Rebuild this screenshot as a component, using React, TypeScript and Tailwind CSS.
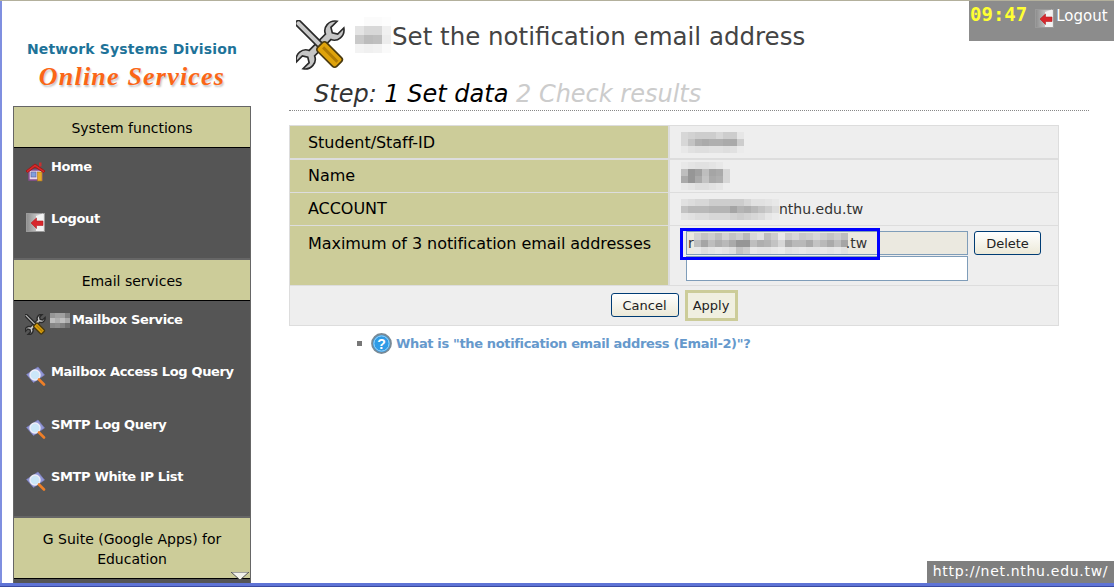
const HouseIcon = () => (
  <svg width="21" height="21" viewBox="0 0 21 21">
    <path d="M4 9h13v10H4z" fill="#e8d8e8" stroke="#8a4f92" strokeWidth="1.4" />
    <path d="M1 10 10 3l10 7-1.500 1.500L10 6 2.500 11.500z" fill="#d92a2a" stroke="#a01818" strokeWidth="1" />
    <rect x="14" y="1.500" width="2.500" height="4" fill="#c83030" />
    <rect x="6" y="11" width="5" height="5" fill="#7f9fdc" stroke="#5a5aa0" strokeWidth=".6" />
    <rect x="12.500" y="11" width="4.500" height="9" fill="#e6a92c" stroke="#a87a18" strokeWidth=".6" />
  </svg>
);

const LogoutIcon = ({ id }: { id: string }) => (
  <svg width="19" height="19" viewBox="0 0 19 19">
    <defs>
      <linearGradient id={id} x1="0" x2="1" y1="0" y2="0">
        <stop offset="0" stopColor="#8c8c8c" />
        <stop offset="1" stopColor="#ededed" />
      </linearGradient>
    </defs>
    <rect x=".5" y=".5" width="18" height="18" fill={`url(#${id})`} stroke="#9a9a9a" />
    <path d="M10 3l7-2.500V18h-7z" fill="#f2f2f2" />
    <path d="M5 10l5.500-5V8H17v4.500h-6.500V15.500z" fill="#d8262c" stroke="#b31e22" strokeWidth=".6" />
  </svg>
);

const SearchIcon = () => (
  <svg width="20" height="20" viewBox="0 0 20 20">
    <path d="M0.500 8.500 12 1l6.500 8-11 7.500z" fill="#9297d6" stroke="#7a7ec4" strokeWidth=".6" />
    <circle cx="9" cy="9" r="5" fill="#cbe7f8" stroke="#eeeef8" strokeWidth="1.400" />
    <path d="M13 13.500l5 5" stroke="#ee7f28" strokeWidth="2.600" strokeLinecap="round" />
  </svg>
);

const ToolsIcon = ({ size = 50, stroke = 1.7 }: { size?: number; stroke?: number }) => (
  <svg width={size} height={size} viewBox="0 0 50 52">
    <g transform="translate(24 26) rotate(45)">
      <path
        d="M-4-12C-11-15-12-25-5-30L-5-21 0-18 5-21 5-30C12-25 11-15 4-12L4 12C11 15 12 25 5 30L5 21 0 18-5 21-5 30C-12 25-11 15-4 12Z"
        fill="#c6c6c6"
        stroke="#2a2a2a"
        strokeWidth={stroke}
      />
    </g>
    <g transform="translate(24 26) rotate(-45)">
      <path d="M-3-31C-3.500-36 3.500-36 3-31L3 2-3 2Z" fill="#c9c9c9" stroke="#2a2a2a" strokeWidth={stroke} />
      <rect x="-6.500" y="0" width="13" height="28" rx="3" fill="#dfa30c" stroke="#4a3a10" strokeWidth={stroke} />
      <rect x="-1" y="4" width="3" height="21" fill="#b17c05" />
    </g>
  </svg>
);

const HelpIcon = () => (
  <svg width="21" height="21" viewBox="0 0 21 21">
    <circle cx="10.500" cy="10.500" r="9.500" fill="#2f9be6" stroke="#7a8a96" strokeWidth="1.800" />
    <circle cx="10.500" cy="10.500" r="7.600" fill="none" stroke="#9fd6fa" strokeWidth="1" />
    <text x="10.500" y="15.500" textAnchor="middle" fontSize="14" fontWeight="700" fill="#fff" fontFamily="Liberation Sans, sans-serif">?</text>
  </svg>
);

// redacted text in the screenshot: rows of grey levels
const Mosaic = ({ rows, cell = 7 }: { rows: number[][]; cell?: number }) => (
  <div className="flex flex-col shrink-0">
    {rows.map((row, i) => (
      <div key={i} className="flex">
        {row.map((v, j) => (
          <div key={j} style={{ width: cell, height: cell, background: `rgb(${v},${v},${v})` }} />
        ))}
      </div>
    ))}
  </div>
);

const titleMosaic = [
  [255, 251, 251, 253],
  [228, 216, 216, 240],
  [201, 188, 191, 236],
  [243, 240, 242, 250],
];
const sideMosaic = [
  [150, 160, 160, 130],
  [190, 175, 190, 170],
  [135, 140, 130, 110],
];
const idMosaic = [
  [215, 210, 205, 205, 205, 215, 205, 205, 230],
  [215, 195, 175, 170, 175, 175, 170, 170, 205],
  [232, 225, 222, 222, 225, 225, 222, 225, 235],
];
const nameMosaic = [
  [232, 228, 225, 225, 228, 232, 238],
  [190, 150, 160, 190, 165, 170, 215],
  [170, 150, 170, 195, 170, 175, 215],
  [232, 228, 222, 222, 226, 230, 238],
];
const accountMosaic = [
  [225, 220, 215, 215, 205, 205, 205, 205, 205, 215, 225, 225, 228, 232],
  [195, 185, 185, 185, 180, 180, 180, 165, 180, 175, 185, 195, 205, 220],
  [228, 225, 220, 220, 215, 215, 215, 210, 205, 210, 215, 220, 230, 235],
];
const mailMosaic = [
  [210, 195, 205, 190, 210, 195, 205, 185, 215, 225, 190, 205, 232, 205, 215, 200, 205, 215, 205, 195, 205, 190],
  [190, 165, 190, 175, 185, 170, 150, 150, 190, 175, 180, 195, 215, 170, 185, 185, 170, 195, 185, 170, 190, 165],
  [232, 222, 228, 232, 228, 222, 195, 205, 232, 228, 228, 232, 235, 225, 228, 232, 228, 228, 232, 228, 232, 225],
];

const font = "font-['DejaVu_Sans',sans-serif]";

const MenuHeader = ({ children }: { children: React.ReactNode }) => (
  <div className="shrink-0 pt-[11px] pb-[9px] px-6 text-center bg-[#cccc99] border-b border-black text-[14px] leading-[20px] text-black">
    {children}
  </div>
);

const MenuItem = ({ icon, children }: { icon: React.ReactNode; children: React.ReactNode }) => (
  <div className="flex h-[52.3px] pl-[11px] gap-[5px] text-[13px] font-bold leading-[18px] tracking-[-0.35px] text-white whitespace-nowrap">
    <div className="flex w-[21px] pt-[13px] justify-center shrink-0">{icon}</div>
    <div className="flex items-start pt-[10px]">{children}</div>
  </div>
);

const LabelRow = ({ label, rowClass, labelClass, value }: { label: string; rowClass: string; labelClass: string; value: React.ReactNode }) => (
  <div className={`flex ${rowClass} border-[#dddddd]`}>
    <div className={`flex w-[378px] shrink-0 items-start pl-[18px] ${labelClass} bg-[#cccc99] text-[16px] leading-[20px] tracking-[-0.05px] text-black`}>
      {label}
    </div>
    <div className="w-[2px] shrink-0 bg-[#dddddd]" />
    {value}
  </div>
);

export default function App() {
  return (
    <div className={`relative flex flex-col h-[587px] w-full overflow-hidden bg-white ${font}`}>
      <div className="h-px shrink-0 bg-[#b3b09c]" />

      <div className="flex flex-1 min-h-0 border-l-2 border-[#7f8fe0]">
        {/* sidebar */}
        <div className="flex flex-col w-[238px] ml-[11px] shrink-0">
          <div className="flex flex-col items-center h-[105px] shrink-0 pt-[39px]">
            <div className="text-[14px] font-bold leading-[18px] tracking-[0.17px] text-[#1e7399] whitespace-nowrap">
              Network Systems Division
            </div>
            <div className="mt-[5px] font-['Liberation_Serif',serif] text-[26px] font-bold italic leading-[28px] tracking-[1.2px] text-[#fb6616] whitespace-nowrap [text-shadow:1px_2px_2px_#c4c4c4]">
              Online Services
            </div>
          </div>

          <div className="relative flex flex-col flex-1 min-h-0 overflow-hidden border-x border-t border-[#666666] bg-[#555555]">
            <MenuHeader>System functions</MenuHeader>
            <div className="flex flex-col h-[112px] shrink-0 border-b-2 border-[#666666]">
              <MenuItem icon={<HouseIcon />}>Home</MenuItem>
              <MenuItem icon={<LogoutIcon id="doorSide" />}>Logout</MenuItem>
            </div>
            <MenuHeader>Email services</MenuHeader>
            <div className="flex flex-col h-[217px] shrink-0 border-b-2 border-[#666666]">
              <MenuItem icon={<ToolsIcon size={21} stroke={3.5} />}>
                <div className="-ml-px mt-[2px] mr-[2px]">
                  <Mosaic rows={sideMosaic} cell={5} />
                </div>
                <span>Mailbox Service</span>
              </MenuItem>
              <MenuItem icon={<SearchIcon />}>Mailbox Access Log Query</MenuItem>
              <MenuItem icon={<SearchIcon />}>SMTP Log Query</MenuItem>
              <MenuItem icon={<SearchIcon />}>SMTP White IP List</MenuItem>
            </div>
            <MenuHeader>
              G Suite (Google Apps) for
              <br />
              Education
            </MenuHeader>
            <svg className="absolute right-px bottom-[3px]" width="18" height="8" viewBox="0 0 18 8">
              <path d="M0 0h18L9 8z" fill="#f4f4ec" stroke="#555555" />
            </svg>
          </div>
        </div>

        {/* content */}
        <div className="flex flex-col ml-[38px] w-[800px] shrink-0">
          <div className="flex h-[70px] shrink-0 pl-[7px] pt-[19px]">
            <ToolsIcon />
            <div className="ml-[9px] mt-[-3px]">
              <Mosaic rows={titleMosaic} cell={9} />
            </div>
            <h1 className="ml-px mt-[1px] text-[24.5px] font-normal leading-[32px] text-[#444444] whitespace-nowrap">
              Set the notification email address
            </h1>
          </div>

          <div className="h-[40px] shrink-0 pl-[25px] pt-[7px] border-b border-dotted border-[#888888] text-[24px] italic leading-[32px] whitespace-nowrap">
            <span className="text-[#333333]">Step: </span>
            <span className="text-black">1 Set data </span>
            <span className="text-[#cccccc]">2 Check results</span>
          </div>

          <div className="flex flex-col w-[770px] mt-[14px] border border-[#dddddd] bg-[#eeeeee]">
            <LabelRow
              label="Student/Staff-ID"
              rowClass="h-[34px] border-b-2"
              labelClass="pt-[7px]"
              value={
                <div className="flex flex-1 items-center pl-[11px]">
                  <Mosaic rows={idMosaic} />
                </div>
              }
            />
            <LabelRow
              label="Name"
              rowClass="h-[33px] border-b"
              labelClass="pt-[6px]"
              value={
                <div className="flex flex-1 items-center pl-[11px]">
                  <Mosaic rows={nameMosaic} />
                </div>
              }
            />
            <LabelRow
              label="ACCOUNT"
              rowClass="h-[33px] border-b"
              labelClass="pt-[6px]"
              value={
                <div className="flex flex-1 items-center pl-[11px] text-[14px] text-[#333333]">
                  <Mosaic rows={accountMosaic} />
                  <span>nthu.edu.tw</span>
                </div>
              }
            />
            <LabelRow
              label="Maximum of 3 notification email addresses"
              rowClass="h-[60px] border-b"
              labelClass="pt-[8px]"
              value={
                <div className="relative flex flex-1 pl-[16px] pt-[5px] gap-[6px]">
                  <div className="flex flex-col gap-px w-[282px]">
                    <div className="flex items-center h-[24px] pl-px border border-[#7f9db9] bg-[#ebe9e0] text-[14px] text-[#333333]">
                      <span>r</span>
                      <Mosaic rows={mailMosaic} />
                      <span className="-ml-[2px]">.tw</span>
                    </div>
                    <input className="h-[25px] border border-[#7f9db9] bg-white" />
                  </div>
                  <button className="w-[67px] h-[24px] pt-px rounded-[3px] border border-[#003c74] bg-gradient-to-b from-white to-[#ece9d8] text-[13px] text-[#222222]">
                    Delete
                  </button>
                  <div className="absolute left-[10px] top-[2px] w-[200px] h-[32px] border-[3px] border-[#0000ff]" />
                </div>
              }
            />
            <div className="flex items-start justify-center gap-[6px] h-[39px] pt-[4px]">
              <button className="mt-[3px] w-[68px] h-[24px] pt-px rounded-[3px] border border-[#003c74] bg-gradient-to-b from-white to-[#ece9d8] text-[13px] text-[#222222]">
                Cancel
              </button>
              <button className="w-[53px] h-[31px] border-[3px] border-[#cccc99] bg-[#f0efe0] text-[13px] text-[#222222]">
                Apply
              </button>
            </div>
          </div>

          <div className="flex items-center mt-[6px] pl-[68px] h-[22px]">
            <div className="w-[5px] h-[5px] bg-[#777777]" />
            <div className="ml-[9px]">
              <HelpIcon />
            </div>
            <a className="ml-[4px] pt-px text-[13px] font-bold tracking-[-0.35px] text-[#6699cc] whitespace-nowrap">
              What is &quot;the notification email address (Email-2)&quot;?
            </a>
          </div>
        </div>
      </div>

      <div className="h-[4px] shrink-0 bg-[#5f74d6] border-b border-[#3a4aa0]" />

      {/* overlays pinned to the window corners */}
      <div className="absolute right-0 top-px flex items-start w-[145px] h-[40px] bg-[#8c8c8c] pl-px pt-[2px]">
        <span className="font-['DejaVu_Sans_Mono',monospace] text-[19px] font-bold leading-[22px] text-[#ffff33]">09:47</span>
        <div className="ml-[8px] mt-[6px]">
          <LogoutIcon id="doorTop" />
        </div>
        <span className="ml-[2px] mt-[2px] text-[15px] leading-[22px] text-white">Logout</span>
      </div>
      <div className="absolute right-0 bottom-[4px] flex items-center justify-center w-[187px] h-[22px] pb-px bg-[#7f7f7f] text-[14px] tracking-[0.7px] text-white">
        http://net.nthu.edu.tw/
      </div>
    </div>
  );
}
